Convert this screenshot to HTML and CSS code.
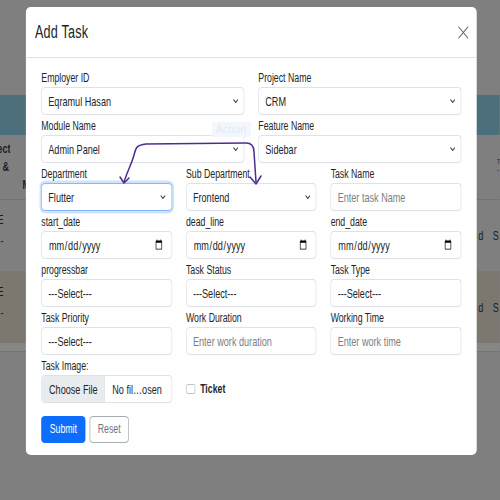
FILE: index.html
```html
<!DOCTYPE html>
<html lang="en">
<head>
<meta charset="utf-8">
<title>Add Task</title>
<link rel="stylesheet" href="styles.css">
</head>
<body>
<div class="stage">
  <div class="backdrop">
    <div class="bg-top"></div>
    <div class="bg-band"></div>
    <div class="bg-head">
      <div class="cell c-left"><span>Project</span><span class="amp">&amp;</span></div>
      <div class="cell c-m">M</div>
      <div class="spacer"></div>
      <div class="cell c-rh"><span>T</span><span>-</span></div>
    </div>
    <div class="bg-row">
      <div class="cell c-left2"><span>E</span><span>-</span></div>
      <div class="spacer"></div>
      <div class="cell c-d">d</div>
      <div class="cell c-s">S</div>
    </div>
    <div class="bg-row beige">
      <div class="cell c-left2"><span>E</span><span>-</span></div>
      <div class="spacer"></div>
      <div class="cell c-d">d</div>
      <div class="cell c-s">S</div>
    </div>
    <div class="bg-foot"></div>
  </div>

  <div class="modal">
    <div class="modal-header">
      <h5 class="modal-title">Add Task</h5>
      <button class="btn-close" type="button" aria-label="Close">
        <svg viewBox="0 0 16 16" preserveAspectRatio="none" width="100%" height="100%"><path d="M1 1 L15 15 M15 1 L1 15" stroke="#6f6f6f" stroke-width="1.2" vector-effect="non-scaling-stroke" fill="none"/></svg>
      </button>
    </div>
    <form class="modal-body">
      <div class="form-grid">
        <div class="field half">
          <label>Employer ID</label>
          <div class="select-wrap"><select class="control"><option>Eqramul Hasan</option></select><svg class="chev" viewBox="0 0 8 4" preserveAspectRatio="none"><polyline points="0.5,0.5 4,3.5 7.5,0.5" vector-effect="non-scaling-stroke"/></svg></div>
        </div>
        <div class="field half">
          <label>Project Name</label>
          <div class="select-wrap"><select class="control"><option>CRM</option></select><svg class="chev" viewBox="0 0 8 4" preserveAspectRatio="none"><polyline points="0.5,0.5 4,3.5 7.5,0.5" vector-effect="non-scaling-stroke"/></svg></div>
        </div>
        <div class="field half">
          <label>Module Name</label>
          <div class="select-wrap"><select class="control"><option>Admin Panel</option></select><svg class="chev" viewBox="0 0 8 4" preserveAspectRatio="none"><polyline points="0.5,0.5 4,3.5 7.5,0.5" vector-effect="non-scaling-stroke"/></svg></div>
        </div>
        <div class="field half">
          <label>Feature Name</label>
          <div class="select-wrap"><select class="control"><option>Sidebar</option></select><svg class="chev" viewBox="0 0 8 4" preserveAspectRatio="none"><polyline points="0.5,0.5 4,3.5 7.5,0.5" vector-effect="non-scaling-stroke"/></svg></div>
        </div>

        <div class="field third">
          <label>Department</label>
          <div class="select-wrap"><select class="control focus"><option>Flutter</option></select><svg class="chev" viewBox="0 0 8 4" preserveAspectRatio="none"><polyline points="0.5,0.5 4,3.5 7.5,0.5" vector-effect="non-scaling-stroke"/></svg></div>
        </div>
        <div class="field third">
          <label>Sub Department</label>
          <div class="select-wrap"><select class="control"><option>Frontend</option></select><svg class="chev" viewBox="0 0 8 4" preserveAspectRatio="none"><polyline points="0.5,0.5 4,3.5 7.5,0.5" vector-effect="non-scaling-stroke"/></svg></div>
        </div>
        <div class="field third">
          <label>Task Name</label>
          <input class="control" type="text" placeholder="Enter task Name">
        </div>

        <div class="field third">
          <label>start_date</label>
          <input class="control" type="date">
        </div>
        <div class="field third">
          <label>dead_line</label>
          <input class="control" type="date">
        </div>
        <div class="field third">
          <label>end_date</label>
          <input class="control" type="date">
        </div>

        <div class="field third">
          <label>progressbar</label>
          <select class="control"><option>---Select---</option></select>
        </div>
        <div class="field third">
          <label>Task Status</label>
          <select class="control"><option>---Select---</option></select>
        </div>
        <div class="field third">
          <label>Task Type</label>
          <select class="control"><option>---Select---</option></select>
        </div>

        <div class="field third">
          <label>Task Priority</label>
          <select class="control"><option>---Select---</option></select>
        </div>
        <div class="field third">
          <label>Work Duration</label>
          <input class="control" type="text" placeholder="Enter work duration">
        </div>
        <div class="field third">
          <label>Working Time</label>
          <input class="control" type="text" placeholder="Enter work time">
        </div>

        <div class="field third">
          <label>Task Image:</label>
          <input class="control file" type="file">
        </div>
        <div class="check third">
          <input type="checkbox" id="ticket"><label for="ticket">Ticket</label>
        </div>
      </div>
      <div class="actions">
        <button class="btn btn-primary" type="submit">Submit</button>
        <button class="btn btn-outline" type="reset">Reset</button>
      </div>
    </form>
  </div>
</div>

<svg class="annot" viewBox="0 0 500 500" width="500" height="500">
  <rect x="212" y="122" width="39" height="15" rx="2" fill="#f3f7fd"/>
  <text x="216" y="133" font-family="Liberation Sans, Arial, sans-serif" font-size="10" fill="#e2e9f6" textLength="30">Action</text>
  <g fill="none" stroke="#4e2d91" stroke-width="1.5" stroke-linecap="round" stroke-linejoin="round">
    <path d="M124,182 C127,172 132,163 134,155 C136,147 137,145 146,144 L246,143 C252,143 254,146 254,152 L256,182"/>
    <path d="M120,177 L124,183 L129,178"/>
    <path d="M250,177 L256,184 L261,176"/>
  </g>
</svg>
</body>
</html>
```

FILE: styles.css
```css
* { box-sizing: border-box; }

html, body {
  margin: 0;
  width: 500px;
  height: 500px;
  overflow: hidden;
  background: #7f7f7f;
}

body {
  font-family: "Liberation Sans", Arial, sans-serif;
  color: #212529;
}

/* the screenshot is horizontally compressed; the whole page is laid out
   wider and squeezed back to 500px */
.stage {
  position: relative;
  width: 714.3px;
  height: 500px;
  transform: scaleX(0.7);
  transform-origin: 0 0;
}

/* ---------- page behind the backdrop ---------- */
.backdrop {
  display: flex;
  flex-direction: column;
  height: 500px;
  overflow: hidden;
  background: #7f7f7f;
  color: #1c1c1c;
  font-size: 13px;
}
.bg-top { height: 95px; flex: none; }
.bg-band { height: 40px; flex: none; background: #4d6e7b; }
.bg-head {
  height: 65px;
  flex: none;
  display: flex;
  font-weight: bold;
  line-height: 18px;
  border-bottom: 1px solid #737373;
}
.bg-row {
  height: 71px;
  flex: none;
  display: flex;
  line-height: 21px;
}
.bg-row.beige { height: 72px; background: #7c786f; }
.bg-foot {
  height: 9px;
  flex: none;
  background: #868686;
  border-bottom: 1px solid #737373;
}
.cell { white-space: nowrap; }
.spacer { flex: 1; }
.c-left {
  width: 15px;
  overflow: hidden;
  display: flex;
  flex-direction: column;
  align-items: flex-end;
  padding-top: 5px;
}
.c-left .amp { margin-right: 2px; }
.c-m { margin-left: 17px; padding-top: 41px; }
.c-rh {
  width: 4.3px;
  overflow: hidden;
  display: flex;
  flex-direction: column;
  padding-top: 23px;
  font-size: 8px;
  line-height: 8px;
  font-weight: normal;
}
.c-left2 {
  width: 5px;
  overflow: hidden;
  display: flex;
  flex-direction: column;
  align-items: flex-end;
  padding-top: 9px;
}
.beige .c-left2 { padding-top: 10px; }
.c-d { padding-top: 25px; margin-right: 13.5px; }
.c-s { width: 10.3px; overflow: hidden; padding-top: 25px; }
.beige .c-d, .beige .c-s { padding-top: 26px; }

/* ---------- modal ---------- */
.modal {
  position: absolute;
  left: 37px;
  top: 7px;
  width: 644px;
  background: #fff;
  border-radius: 7px / 5px;
}
.modal-header {
  height: 51px;
  display: flex;
  align-items: center;
  justify-content: space-between;
  padding: 0 11px 0 13px;
  border-bottom: 1px solid #dee2e6;
}
.modal-title {
  margin: 0;
  font-size: 18px;
  font-weight: 400;
  line-height: 22px;
  letter-spacing: 0.3px;
  color: #212529;
}
.btn-close {
  border: 0;
  background: none;
  padding: 0;
  width: 15.7px;
  height: 13px;
  display: flex;
  cursor: pointer;
}

.modal-body { display: block; padding: 13px 22px 12px; margin: 0; }

.form-grid {
  display: grid;
  grid-template-columns: repeat(6, 1fr);
  column-gap: 20px;
  row-gap: 4px;
}
.half { grid-column: span 3; }
.third { grid-column: span 2; }

.field { display: flex; flex-direction: column; }
.field > label {
  font-size: 12.5px;
  line-height: 15px;
  margin-bottom: 1px;
  color: #212529;
}

.control {
  display: block;
  width: 100%;
  height: 28px;
  margin: 0;
  border: 1px solid #dee2e6;
  border-radius: 5.7px / 4px;
  padding: 0 9px;
  font: 13px "Liberation Sans", Arial, sans-serif;
  color: #212529;
  background: #fff;
  outline: none;
}
select.control {
  appearance: none;
  -webkit-appearance: none;
  padding-right: 24px;
}
.control::placeholder { color: #7a8086; opacity: 1; }
.control.focus {
  border-color: #86b7fe;
  box-shadow: 0 0 0 2.5px rgba(13, 110, 253, 0.2);
}

.select-wrap { position: relative; }
.chev {
  position: absolute;
  right: 9px;
  top: 12px;
  width: 7.5px;
  height: 4px;
  fill: none;
  stroke: #343a40;
  stroke-width: 1.1;
  pointer-events: none;
}

input[type="date"].control { padding-right: 12px; }
input[type="date"].control::-webkit-calendar-picker-indicator {
  margin: 0;
  padding: 0;
  width: 12px;
  height: 12px;
}

.file.control {
  padding: 0 9px 0 0;
  line-height: 26px;
  overflow: hidden;
}
.file.control::file-selector-button {
  height: 26px;
  margin: 0 10px 0 0;
  padding: 0 10px;
  border: 0;
  border-right: 1px solid #dee2e6;
  background: #e9ecef;
  color: #212529;
  font: 13px "Liberation Sans", Arial, sans-serif;
}

.check {
  display: flex;
  align-items: center;
  align-self: end;
  height: 28px;
  gap: 7.3px;
  font-size: 12.5px;
  font-weight: bold;
  color: #212529;
}
.check input {
  appearance: none;
  -webkit-appearance: none;
  margin: 0;
  width: 13px;
  height: 10px;
  border: 1px solid #bfc4c9;
  border-radius: 3px / 2px;
  background: #fff;
}

.actions {
  display: flex;
  gap: 5.7px;
  margin-top: 12.6px;
}
.btn {
  height: 27px;
  padding: 0 11px;
  font: 12.5px "Liberation Sans", Arial, sans-serif;
  border: 1px solid;
  border-radius: 5.7px / 4px;
  cursor: pointer;
}
.btn-primary { background: #0d6efd; border-color: #0d6efd; color: #fff; }
.btn-outline { background: #fff; border-color: #a7acb1; color: #6c757d; }

/* ---------- annotation drawn over the screenshot ---------- */
.annot {
  position: absolute;
  left: 0;
  top: 0;
  pointer-events: none;
}
```
